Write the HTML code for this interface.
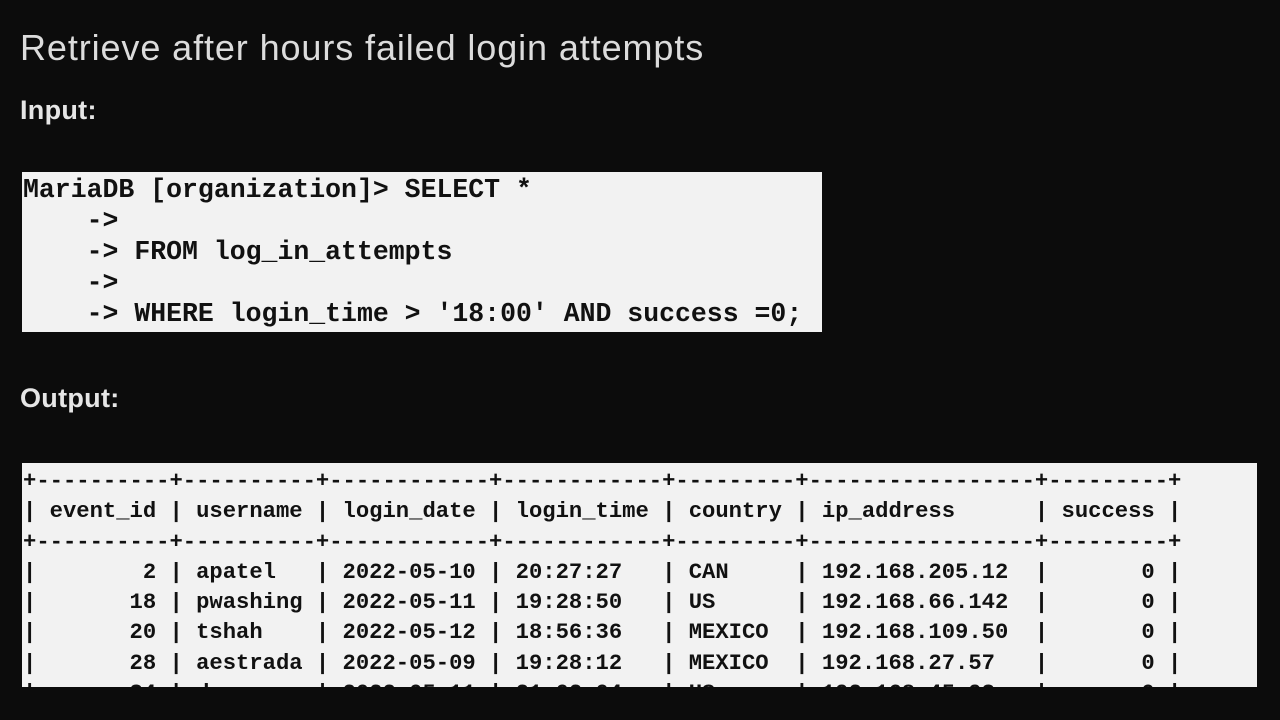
<!DOCTYPE html>
<html><head><style>
body{margin:0;width:1280px;height:720px;background:#0c0c0c;position:relative;overflow:hidden;font-family:"Liberation Sans",sans-serif;}
.t{position:absolute;color:#e6e6e6;white-space:nowrap;}
pre{margin:0;font-family:"Liberation Mono",monospace;font-weight:bold;color:#111;white-space:pre;}
.box{position:absolute;background:#f2f2f2;overflow:hidden;}
</style></head><body>
<div class="t" style="left:20px;top:27px;font-size:36px;color:#dcdcdc;letter-spacing:0.9px;">Retrieve after hours failed login attempts</div>
<div class="t" style="left:20px;top:95px;font-size:27px;font-weight:bold;letter-spacing:0.3px;">Input:</div>
<div class="t" style="left:20px;top:383px;font-size:27px;font-weight:bold;letter-spacing:0.3px;">Output:</div>
<div class="box" style="left:22px;top:172px;width:800px;height:160px;">
<pre style="position:absolute;left:1px;top:3px;font-size:26.5px;line-height:31px;">MariaDB [organization]&gt; SELECT *
    -&gt;
    -&gt; FROM log_in_attempts
    -&gt;
    -&gt; WHERE login_time &gt; '18:00' AND success =0;</pre>
</div>
<div class="box" style="left:22px;top:463px;width:1235px;height:224px;">
<pre style="position:absolute;left:1px;top:4px;font-size:22.2px;line-height:30.3px;">+----------+----------+------------+------------+---------+-----------------+---------+
| event_id | username | login_date | login_time | country | ip_address      | success |
+----------+----------+------------+------------+---------+-----------------+---------+
|        2 | apatel   | 2022-05-10 | 20:27:27   | CAN     | 192.168.205.12  |       0 |
|       18 | pwashing | 2022-05-11 | 19:28:50   | US      | 192.168.66.142  |       0 |
|       20 | tshah    | 2022-05-12 | 18:56:36   | MEXICO  | 192.168.109.50  |       0 |
|       28 | aestrada | 2022-05-09 | 19:28:12   | MEXICO  | 192.168.27.57   |       0 |
|       34 | drosas   | 2022-05-11 | 21:02:04   | US      | 192.168.45.93   |       0 |</pre>
</div>
</body></html>
